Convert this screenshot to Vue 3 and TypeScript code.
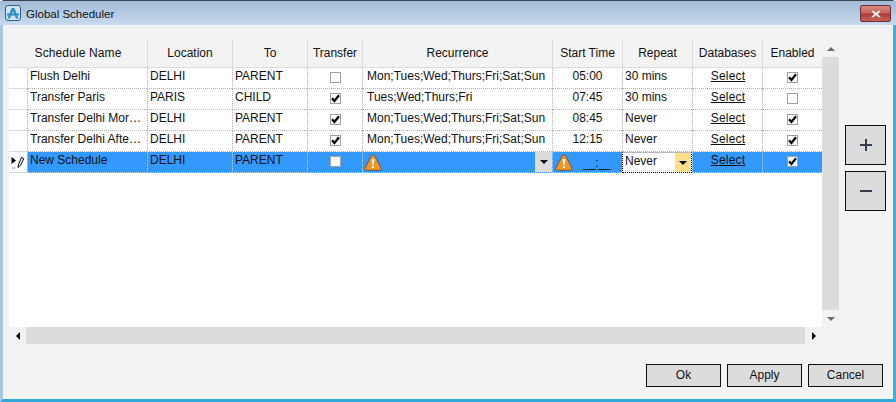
<script setup lang="ts">
interface Row {
  name: string
  location: string
  to: string
  transfer: boolean
  recurrence: string
  time: string
  repeat: string
  enabled: boolean
}

const columns = ['Schedule Name', 'Location', 'To', 'Transfer', 'Recurrence', 'Start Time', 'Repeat', 'Databases', 'Enabled']
const all = 'Mon;Tues;Wed;Thurs;Fri;Sat;Sun'
const rows: Row[] = [
  { name: 'Flush Delhi', location: 'DELHI', to: 'PARENT', transfer: false, recurrence: all, time: '05:00', repeat: '30 mins', enabled: true },
  { name: 'Transfer Paris', location: 'PARIS', to: 'CHILD', transfer: true, recurrence: 'Tues;Wed;Thurs;Fri', time: '07:45', repeat: '30 mins', enabled: false },
  { name: 'Transfer Delhi Mor…', location: 'DELHI', to: 'PARENT', transfer: true, recurrence: all, time: '08:45', repeat: 'Never', enabled: true },
  { name: 'Transfer Delhi Afte…', location: 'DELHI', to: 'PARENT', transfer: true, recurrence: all, time: '12:15', repeat: 'Never', enabled: true }
]
</script>

<template>
  <div class="window">
    <header class="titlebar">
      <svg class="app-icon" width="16" height="16" viewBox="0 0 16 16">
        <rect x="0.5" y="0.5" width="15" height="15" rx="2.5" fill="#cfe3f1" stroke="#2c5f86" />
        <path d="M2.5 13.5 L6.6 3 H9.4 L13.5 13.5 H11 L8 6.2 L5 13.5 Z" fill="#2e8cc0" />
        <path d="M2 8.5 H14 V10.5 H2 Z" fill="#2e8cc0" />
      </svg>
      <span class="title">Global Scheduler</span>
      <button class="close" aria-label="Close">
        <svg width="12" height="8" viewBox="0 0 12 8">
          <path d="M0.5 0.5 H3.6 L6 2.4 L8.4 0.5 H11.5 L8 4 L11.5 7.5 H8.4 L6 5.6 L3.6 7.5 H0.5 L4 4 Z" fill="#f4f1f1" stroke="#8b5a5a" stroke-width="0.5" />
        </svg>
      </button>
    </header>

    <div class="client">
      <div class="main">
        <div class="grid-shell">
          <div class="grid">
            <div class="head-row">
              <div v-for="c in columns" :key="c" class="head-cell">{{ c }}</div>
            </div>

            <div v-for="r in rows" :key="r.name" class="row">
              <div class="row-head"></div>
              <div class="cell">{{ r.name }}</div>
              <div class="cell">{{ r.location }}</div>
              <div class="cell">{{ r.to }}</div>
              <div class="cell center">
                <span class="check">
                  <svg v-if="r.transfer" width="9" height="9" viewBox="0 0 9 9"><path d="M1 4.2 L3.4 7 L8 1.2" fill="none" stroke="#000" stroke-width="2.2" /></svg>
                </span>
              </div>
              <div class="cell recurrence">{{ r.recurrence }}</div>
              <div class="cell center">{{ r.time }}</div>
              <div class="cell">{{ r.repeat }}</div>
              <div class="cell center"><u class="link">Select</u></div>
              <div class="cell center">
                <span class="check">
                  <svg v-if="r.enabled" width="9" height="9" viewBox="0 0 9 9"><path d="M1 4.2 L3.4 7 L8 1.2" fill="none" stroke="#000" stroke-width="2.2" /></svg>
                </span>
              </div>
            </div>

            <div class="row selected">
              <div class="row-head">
                <svg width="14" height="14" viewBox="0 0 14 14">
                  <path d="M0.5 2 L5 5.5 L0.5 9 Z" fill="#000" />
                  <path d="M7 12.5 L7.5 9.5 L10.5 2.5 L12.8 3.5 L9.5 10.5 Z" fill="#fff" stroke="#000" stroke-width="1" />
                  <path d="M1 13 H2 M3 13 H4" stroke="#444" stroke-width="1" />
                </svg>
              </div>
              <div class="cell">New Schedule</div>
              <div class="cell">DELHI</div>
              <div class="cell">PARENT</div>
              <div class="cell center"><span class="check"></span></div>
              <div class="cell edit-cell">
                <svg class="warn" width="18" height="17" viewBox="0 0 18 17">
                  <path d="M9 0.8 C10 0.8 10.6 1.4 11 2.2 L17 14 C17.6 15.2 17 16.3 15.6 16.3 H2.4 C1 16.3 0.4 15.2 1 14 L7 2.2 C7.4 1.4 8 0.8 9 0.8 Z" fill="#f7931e" stroke="#5f5a55" stroke-width="1" />
                  <path d="M7.7 5 H10.3 L9.8 10.8 H8.2 Z" fill="#fff" />
                  <rect x="8" y="12" width="2" height="2" fill="#fff" />
                </svg>
                <span class="drop grey"><i class="caret"></i></span>
              </div>
              <div class="cell time-edit">
                <svg class="warn" width="18" height="17" viewBox="0 0 18 17">
                  <path d="M9 0.8 C10 0.8 10.6 1.4 11 2.2 L17 14 C17.6 15.2 17 16.3 15.6 16.3 H2.4 C1 16.3 0.4 15.2 1 14 L7 2.2 C7.4 1.4 8 0.8 9 0.8 Z" fill="#f7931e" stroke="#5f5a55" stroke-width="1" />
                  <path d="M7.7 5 H10.3 L9.8 10.8 H8.2 Z" fill="#fff" />
                  <rect x="8" y="12" width="2" height="2" fill="#fff" />
                </svg>
                <span class="mask">__:__</span>
              </div>
              <div class="cell repeat-edit">
                <span class="repeat-text">Never</span>
                <span class="drop yellow"><i class="caret"></i></span>
              </div>
              <div class="cell center"><u class="link">Select</u></div>
              <div class="cell center">
                <span class="check">
                  <svg width="9" height="9" viewBox="0 0 9 9"><path d="M1 4.2 L3.4 7 L8 1.2" fill="none" stroke="#000" stroke-width="2.2" /></svg>
                </span>
              </div>
            </div>
          </div>

          <div class="vscroll">
            <span class="sb-btn"><i class="tri up"></i></span>
            <span class="v-track"></span>
            <span class="sb-btn"><i class="tri down"></i></span>
          </div>
          <div class="hscroll">
            <span class="sb-btn wide"><i class="tri left"></i></span>
            <span class="h-track"></span>
            <span class="sb-btn wide"><i class="tri right"></i></span>
          </div>
          <div class="corner"></div>
        </div>

        <div class="side">
          <button class="side-btn" aria-label="Add">
            <svg width="14" height="14" viewBox="0 0 14 14"><path d="M7 1 V13 M1 7 H13" stroke="#333f50" stroke-width="2" /></svg>
          </button>
          <button class="side-btn" aria-label="Remove">
            <svg width="14" height="14" viewBox="0 0 14 14"><path d="M1 7 H13" stroke="#333f50" stroke-width="2" /></svg>
          </button>
        </div>
      </div>

      <footer class="footer">
        <button class="action">Ok</button>
        <button class="action">Apply</button>
        <button class="action">Cancel</button>
      </footer>
    </div>
  </div>
</template>

<style>
html, body { margin: 0; padding: 0; background: #f3f3f3; }
</style>

<style scoped>
.window {
  width: 896px;
  height: 402px;
  box-sizing: border-box;
  display: flex;
  flex-direction: column;
  font-family: "Liberation Sans", Arial, sans-serif;
  font-size: 12px;
  color: #111;
  background: #f3f3f3;
  border-left: 3px solid #a9c6e4;
  border-right: 3px solid #3fb0dc;
  border-bottom: 3px solid #2fa8d8;
  border-top: 1px solid #3a4450;
  border-radius: 4px 4px 0 0;
}
.titlebar {
  height: 24px;
  flex: none;
  margin: 0 -3px 0 -3px;
  padding: 4px 5px 0 5px;
  box-sizing: border-box;
  display: flex;
  align-items: flex-start;
  background: linear-gradient(#a2bbd8, #c7daee);
}
.app-icon { flex: none; }
.title {
  margin-left: 5px;
  margin-top: 1px;
  line-height: 16px;
  font-size: 11.5px;
  color: #111;
}
.close {
  margin-left: auto;
  width: 31px;
  height: 17px;
  padding: 0;
  display: flex;
  align-items: center;
  justify-content: center;
  border: 1px solid #6e2f35;
  border-radius: 2px;
  background: linear-gradient(#d9897f 0%, #c8645c 45%, #ad3a32 55%, #c8645c 100%);
}
.client {
  flex: 1;
  display: flex;
  flex-direction: column;
  padding: 15px 10px 12px 6px;
  min-height: 0;
}
.main {
  display: flex;
  align-items: flex-start;
}
.grid-shell {
  display: grid;
  grid-template-columns: 813px 17px;
  grid-template-rows: 287px 17px;
}
.grid {
  background: #fff;
  overflow: hidden;
}
.head-row {
  height: 28px;
  display: grid;
  grid-template-columns: 138px 85px 75px 55px 190px 70px 70px 70px 60px;
  background: #f3f3f3;
}
.row {
  height: 21px;
  display: grid;
  grid-template-columns: 18px 120px 85px 75px 55px 190px 70px 70px 70px 60px;
}
.head-cell {
  display: flex;
  align-items: center;
  justify-content: center;
  box-sizing: border-box;
  padding-bottom: 2px;
  border-left: 1px solid #dcdcdc;
  border-bottom: 1px solid #dcdcdc;
  white-space: nowrap;
}
.head-cell:first-child { border-left: 0; letter-spacing: 0.12px; }
.row-head {
  box-sizing: border-box;
  border-bottom: 1px solid #dcdcdc;
  display: flex;
  align-items: center;
  justify-content: center;
}
.cell {
  box-sizing: border-box;
  display: flex;
  align-items: center;
  padding: 0 0 4px 2px;
  border-left: 1px dotted #b0b0b0;
  border-bottom: 1px dotted #b0b0b0;
  white-space: nowrap;
  overflow: hidden;
}
.center { justify-content: center; padding-left: 0; }
.recurrence { padding-left: 4px; }
.link { letter-spacing: 0.2px; margin-left: 1px; }
.selected .cell {
  background: #3399ff;
  border-color: #c8d4e4;
}
.check {
  width: 9px;
  height: 9px;
  box-sizing: content-box;
  border: 1px solid #a0a0a0;
  background: #fff;
  display: flex;
  align-items: center;
  justify-content: center;
  transform: translateY(1px);
}
.check svg { flex: none; overflow: visible; }
.edit-cell { padding: 0; justify-content: space-between; }
.warn { flex: none; margin-left: 1px; margin-top: 1px; }
.drop {
  flex: none;
  width: 17px;
  height: 20px;
  display: flex;
  align-items: center;
  justify-content: center;
}
.grey { background: #dcdcdc; }
.yellow { background: #ffe08a; }
.caret {
  width: 0;
  height: 0;
  border-left: 4px solid transparent;
  border-right: 4px solid transparent;
  border-top: 4px solid #000;
}
.time-edit { padding: 0 0 0 1px; }
.mask { margin-left: 10px; margin-top: 1px; letter-spacing: -0.6px; }
.selected .repeat-edit {
  padding: 0 0 0 2px;
  background: #fff;
  border: 1px dotted #000;
  border-top: 1px solid #b8b8b8;
  justify-content: space-between;
}
.repeat-text { margin-bottom: 3px; }
.selected .yellow { height: 19px; width: 16px; }
.vscroll {
  display: flex;
  flex-direction: column;
  background: #f3f3f3;
}
.sb-btn {
  flex: none;
  height: 17px;
  display: flex;
  align-items: center;
  justify-content: center;
  background: #f3f3f3;
}
.sb-btn.wide { width: 17px; height: auto; }
.v-track { flex: 1; background: #dcdcdc; }
.hscroll { display: flex; background: #f3f3f3; }
.h-track { flex: 1; background: #dcdcdc; }
.corner { background: #f3f3f3; }
.tri { width: 0; height: 0; display: block; }
.tri.up { border-left: 4px solid transparent; border-right: 4px solid transparent; border-bottom: 4px solid #6a6a6a; }
.tri.down { border-left: 4px solid transparent; border-right: 4px solid transparent; border-top: 4px solid #6a6a6a; }
.tri.left { border-top: 4px solid transparent; border-bottom: 4px solid transparent; border-right: 4px solid #000; }
.tri.right { border-top: 4px solid transparent; border-bottom: 4px solid transparent; border-left: 4px solid #000; }
.side {
  display: flex;
  flex-direction: column;
  gap: 6px;
  margin-left: 6px;
  margin-top: 85px;
}
.side-btn {
  width: 41px;
  height: 40px;
  padding: 0;
  box-sizing: border-box;
  border: 1px solid #111;
  background: #dcdcdc;
  display: flex;
  align-items: center;
  justify-content: center;
}
.footer {
  margin-top: 20px;
  display: flex;
  justify-content: flex-end;
  gap: 6px;
}
.action {
  width: 75px;
  height: 23px;
  padding: 0 0 2px;
  box-sizing: border-box;
  border: 1px solid #111;
  background: #dcdcdc;
  font: inherit;
  color: #111;
}
</style>
